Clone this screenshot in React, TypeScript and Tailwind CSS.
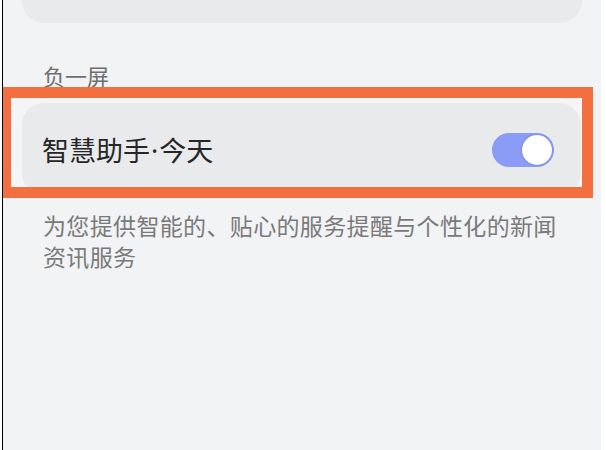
export default function App() {
  return (
    <div
      className="flex h-[450px] w-[606px] overflow-hidden bg-white"
      style={{ fontFamily: '"Noto Sans CJK SC", "Noto Sans", sans-serif' }}
    >
      <div className="w-[2px] bg-white" />
      <div className="w-px bg-black" />
      <div className="flex flex-1 flex-col bg-[#f2f3f5]">
        <div className="ml-[19px] h-[23px] w-[560px] rounded-b-[22px] bg-[#e9eaec]" />
        <div className="ml-[40px] mt-[40px] h-[24px] text-[22px] leading-[24px] text-[#6f6f6f]">负一屏</div>
        <div className="w-[590px] h-[111px] border-[11px] border-l-[8px] border-[#f36f40] bg-[#f5f5f6] overflow-hidden">
          <div className="ml-[11px] mr-px mt-[5px] flex h-[92px] items-center justify-between rounded-[22px] bg-[#e9eaec] pl-[20px] pr-[27px]">
            <span className="text-[27px] leading-[30px] text-[#262626] mt-[2px]">
              智慧助手<span className="mx-[1px]" style={{ fontFamily: '"Noto Sans", sans-serif' }}>·</span>今天
            </span>
            <div className="relative h-[34px] w-[62px] rounded-full bg-[#8a9cf6] mt-[2px]">
              <div className="absolute right-[2px] top-[2px] h-[30px] w-[30px] rounded-full bg-white shadow-[0_0_2px_rgba(60,70,140,0.5)]" />
            </div>
          </div>
        </div>
        <div className="ml-[40px] mt-[12px] w-[520px] text-[23px] leading-[31px] tracking-[0.35px] text-[#7a7a7a]">
          为您提供智能的、贴心的服务提醒与个性化的新闻资讯服务
        </div>
      </div>
      <div className="w-[5px] bg-white" />
    </div>
  );
}
